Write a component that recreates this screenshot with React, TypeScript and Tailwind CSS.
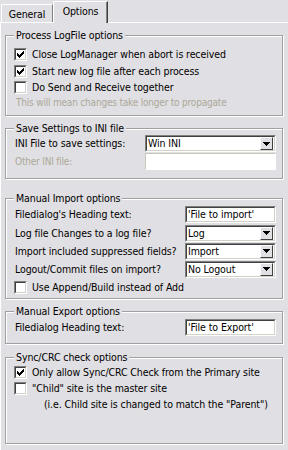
import React from "react";

function Check({ checked, label }: { checked?: boolean; label: string }) {
  return (
    <div className="flex items-center h-full">
      <span className="w-[13px] h-[13px] border border-t-[#808080] border-l-[#808080] border-r-white border-b-white flex">
        <span className="flex-1 bg-white border border-t-[#404040] border-l-[#404040] border-r-[#d4d0c8] border-b-[#d4d0c8] flex items-center justify-center">
          {checked && (
            <svg width="7" height="7" viewBox="0 0 7 7" shapeRendering="crispEdges">
              <rect x="0" y="2" width="1" height="3" fill="#000" />
              <rect x="1" y="3" width="1" height="3" fill="#000" />
              <rect x="2" y="4" width="1" height="3" fill="#000" />
              <rect x="3" y="3" width="1" height="3" fill="#000" />
              <rect x="4" y="2" width="1" height="3" fill="#000" />
              <rect x="5" y="1" width="1" height="3" fill="#000" />
              <rect x="6" y="0" width="1" height="3" fill="#000" />
            </svg>
          )}
        </span>
      </span>
      <span className="ml-[5px] whitespace-nowrap">{label}</span>
    </div>
  );
}

function Sunken({ className, children }: { className?: string; children?: React.ReactNode }) {
  return (
    <div className={`border border-t-[#808080] border-l-[#808080] border-r-white border-b-white flex ${className ?? ""}`}>
      <div className="flex-1 flex items-center bg-white border border-t-[#404040] border-l-[#404040] border-r-[#d4d0c8] border-b-[#d4d0c8] min-w-0">
        {children}
      </div>
    </div>
  );
}

function Combo({ value, className }: { value: string; className: string }) {
  return (
    <Sunken className={className}>
      <span className="flex-1 pl-[1px] whitespace-nowrap overflow-hidden">{value}</span>
      <span className="w-[13px] h-[13px] mr-[1px] bg-[#e0dfe3] border border-t-[#ffffff] border-l-[#ffffff] border-r-[#404040] border-b-[#404040] flex items-center justify-center">
        <svg width="7" height="4" viewBox="0 0 7 4" shapeRendering="crispEdges">
          <rect x="0" y="0" width="7" height="1" fill="#000" />
          <rect x="1" y="1" width="5" height="1" fill="#000" />
          <rect x="2" y="2" width="3" height="1" fill="#000" />
          <rect x="3" y="3" width="1" height="1" fill="#000" />
        </svg>
      </span>
    </Sunken>
  );
}

function Group({ title, className, children }: { title: string; className: string; children: React.ReactNode }) {
  return (
    <fieldset
      className={`border border-[#a0a0a0] shadow-[1px_1px_0_#ffffff,inset_1px_1px_0_#ffffff] pl-[8px] pr-[6px] ${className}`}
    >
      <legend className="px-[2px] leading-[13px] bg-[#e0dfe3] whitespace-nowrap">{title}</legend>
      {children}
    </fieldset>
  );
}

function Row({ label, children, h = "h-[18px]" }: { label: string; children: React.ReactNode; h?: string }) {
  return (
    <div className={`flex items-center justify-between ${h}`}>
      <span className="pl-[1px] whitespace-nowrap">{label}</span>
      {children}
    </div>
  );
}

export default function App() {
  return (
    <div
      className="w-[288px] h-[450px] overflow-hidden bg-[#e0dfe3] text-[10.5px] leading-[13px] tracking-[-0.1px] text-black"
      style={{ fontFamily: '"DejaVu Sans Condensed", "Liberation Sans", Arial, sans-serif' }}
    >
      {/* tabs */}
      <div className="flex items-end h-[22px] pl-[1px]">
        <div className="w-[52px] h-[18px] border-t border-l border-white border-r border-r-[#808080] rounded-tl-[2px] flex items-center justify-center pt-[1px]">
          General
        </div>
        <div className="relative z-10 -mb-px w-[55px] h-[22px] bg-[#e0dfe3] border-t border-l border-white border-r border-r-[#404040] shadow-[inset_-1px_0_0_#808080] rounded-tl-[2px] flex items-center justify-center pb-[2px]">
          Options
        </div>
      </div>

      {/* panel */}
      <div className="w-[300px] h-[428px] border-t border-l border-white pl-[4px] pt-[6px]">
        <div className="w-[278px]">
          <Group title="Process LogFile options" className="h-[87px]">
            <div className="pt-[4px]">
              <div className="h-[17px]">
                <Check checked label="Close LogManager when abort is received" />
              </div>
              <div className="h-[16px]">
                <Check checked label="Start new log file after each process" />
              </div>
              <div className="h-[16px]">
                <Check label="Do Send and Receive together" />
              </div>
              <div className="h-[14px] flex items-center pl-[2px] text-[10px] tracking-[-0.2px] text-[#aca899] whitespace-nowrap">
                This will mean changes take longer to propagate
              </div>
            </div>
          </Group>

          <Group title="Save Settings to INI file" className="mt-[6px] h-[57px]">
            <Row label="INI File to save settings:" h="h-[17px]">
              <Combo value="Win INI" className="w-[131px] h-[17px]" />
            </Row>
            <div className="flex items-center justify-between h-[17px] mt-[1px]">
              <span className="pl-[1px] text-[10px] tracking-[-0.2px] text-[#aca899]">Other INI file:</span>
              <div className="w-[131px] h-[17px] bg-white border border-t-[#c9c7ba] border-l-[#c9c7ba] border-r-white border-b-white" />
            </div>
          </Group>

          <Group title="Manual Import options" className="mt-[13px] h-[107px]">
            <Row label="Filedialog's Heading text:" h="h-[19px]">
              <Sunken className="w-[91px] h-[17px]">
                <span className="pl-[1px]">'File to import'</span>
              </Sunken>
            </Row>
            <Row label="Log file Changes to a log file?">
              <Combo value="Log" className="w-[91px] h-[17px]" />
            </Row>
            <Row label="Import included suppressed fields?">
              <Combo value="Import" className="w-[91px] h-[17px]" />
            </Row>
            <Row label="Logout/Commit files on import?">
              <Combo value="No Logout" className="w-[91px] h-[17px]" />
            </Row>
            <div className="h-[18px]">
              <Check label="Use Append/Build instead of Add" />
            </div>
          </Group>

          <Group title="Manual Export options" className="mt-[6px] h-[39px]">
            <Row label="Filedialog Heading text:">
              <Sunken className="w-[91px] h-[17px]">
                <span className="pl-[1px]">'File to Export'</span>
              </Sunken>
            </Row>
          </Group>

          <Group title="Sync/CRC check options" className="mt-[7px] h-[93px]">
            <div className="h-[16px]">
              <Check checked label="Only allow Sync/CRC Check from the Primary site" />
            </div>
            <div className="h-[16px]">
              <Check label={'"Child" site is the master site'} />
            </div>
            <div className="h-[16px] flex items-center pl-[30px] whitespace-nowrap">
              (i.e. Child site is changed to match the "Parent")
            </div>
          </Group>
        </div>
      </div>
    </div>
  );
}
